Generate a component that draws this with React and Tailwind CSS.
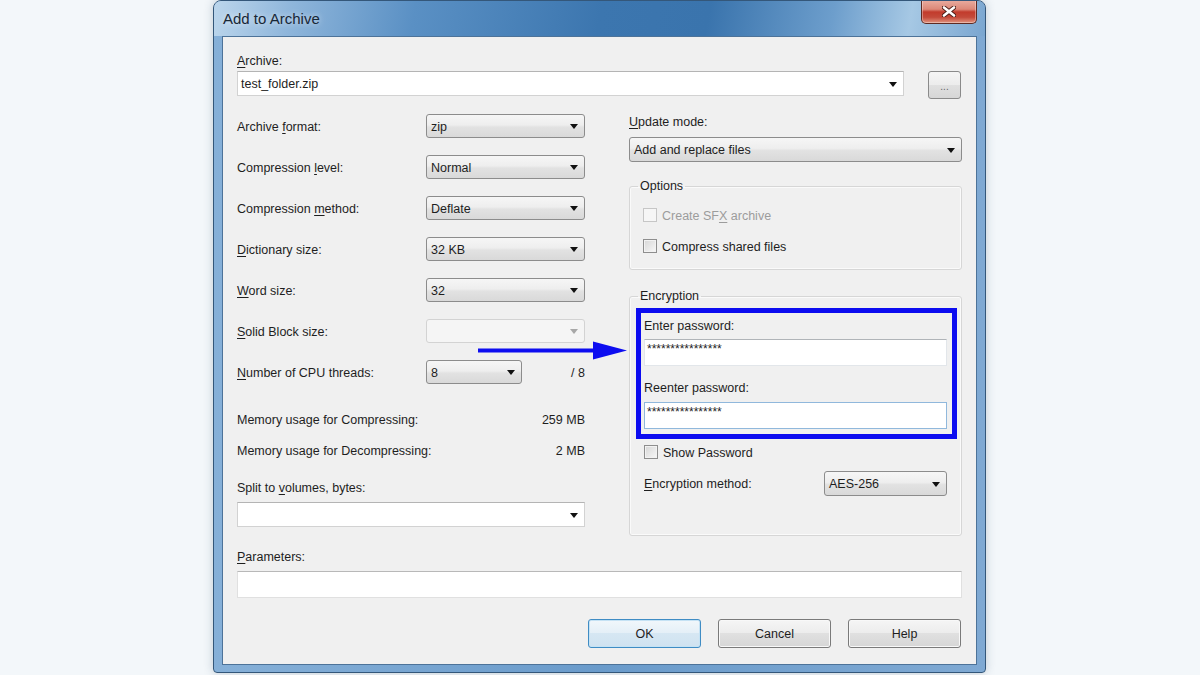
import React from "react";

function U({ children }) {
  return <span className="underline underline-offset-2">{children}</span>;
}

function Caret({ disabled }) {
  return (
    <svg width="8" height="5" viewBox="0 0 8 5" className="shrink-0">
      <polygon points="0,0 8,0 4,5" fill={disabled ? "#a8a8a8" : "#111"} />
    </svg>
  );
}

// gray read-only dropdown (Win7 style)
function Select({ value, className }) {
  return (
    <div
      className={`flex items-center justify-between rounded-[3px] border border-[#8c8c8c] bg-[linear-gradient(#f6f6f6,#eeeeee_45%,#e2e2e2_55%,#d9d9d9)] pt-[1px] pl-[4px] pr-[6px] ${className}`}
    >
      <span>{value}</span>
      <Caret />
    </div>
  );
}

// white editable combo
function Combo({ value, className }) {
  return (
    <div
      className={`flex items-center justify-between border border-[#d2d2d2] border-t-[#b4b4b4] bg-white pt-[1px] pl-[3px] pr-[6px] ${className}`}
    >
      <span>{value}</span>
      <Caret />
    </div>
  );
}

function Checkbox({ label, disabled }) {
  return (
    <div className="flex h-[16px] items-center gap-[5px]">
      {disabled ? (
        <div className="h-[14px] w-[14px] border border-[#c6c6c6] bg-[#f6f6f6]" />
      ) : (
        <div className="h-[14px] w-[14px] border border-[#8e8e8e] bg-[linear-gradient(135deg,#d6d6d6,#f8f8f8)] shadow-[inset_0_0_0_1px_#f2f2f2]" />
      )}
      <span className={disabled ? "pt-[1px] text-[#9c9c9c]" : "pt-[1px]"}>{label}</span>
    </div>
  );
}

function Row({ label, children }) {
  return (
    <div className="flex h-[24px] items-center">
      <div className="w-[189px] shrink-0 pt-[2px]">{label}</div>
      {children}
    </div>
  );
}

function DlgButton({ children, primary }) {
  return (
    <div
      className={
        primary
          ? "flex h-[29px] w-[113px] items-center justify-center rounded-[3px] border border-[#3f8cc4] bg-[linear-gradient(#f1f7fb,#e4eff7_50%,#d6e7f3_50%,#cfe2f0)] shadow-[inset_0_0_0_1px_#c5e2f4]"
          : "flex h-[29px] w-[113px] items-center justify-center rounded-[3px] border border-[#7a7a7a] bg-[linear-gradient(#f5f5f5,#ececec_50%,#e0e0e0_50%,#d6d6d6)] shadow-[inset_0_0_0_1px_#f8f8f8]"
      }
    >
      {children}
    </div>
  );
}

function CloseButton() {
  return (
    <div className="-mt-[1px] flex h-[24px] w-[56px] items-center justify-center rounded-b-[5px] border border-t-0 border-[#5e2a22] bg-[linear-gradient(#e9ada1,#dc8878_40%,#c23b2c_52%,#c44a3a_75%,#e1947f)] shadow-[inset_0_0_0_1px_rgba(255,255,255,0.35)]">
      <svg width="14" height="11" viewBox="0 0 14 11">
        <path d="M2 1.5 L12 9.5 M12 1.5 L2 9.5" stroke="#4a1d17" strokeWidth="4.4" strokeLinecap="round" />
        <path d="M2 1.5 L12 9.5 M12 1.5 L2 9.5" stroke="#fff" strokeWidth="2.6" strokeLinecap="round" />
      </svg>
    </div>
  );
}

export default function App() {
  return (
    <div className="relative h-[675px] w-[1200px] overflow-hidden bg-[#f3f7fa] font-['Liberation_Sans',Arial,sans-serif] text-[12.5px] leading-[16px] text-[#1e1e1e]">
      <div className="ml-[213px] flex h-[673px] w-[773px] flex-col overflow-hidden rounded-t-[8px] rounded-b-[4px] border border-[#34577a] bg-[linear-gradient(90deg,#86b0d8,#6a9bcb_50%,#7fa9d3)] px-[8px] pb-[7px] shadow-[0_0_10px_rgba(40,70,100,0.25)]">
        {/* title bar */}
        <div className="-mx-[8px] flex h-[35px] items-start justify-between bg-[linear-gradient(100deg,#bcd6ec_0%,#8fb6db_10%,#5a90c4_26%,#3c76af_50%,#3a74ad_64%,#6d9ecc_80%,#a6c8e4_90%,#7aa6d0_100%)] px-[8px]">
          <span className="mt-[9px] pl-[1px] text-[15px] leading-[18px] text-[#182736] [text-shadow:0_0_6px_rgba(255,255,255,0.7)]">
            Add to Archive
          </span>
          <CloseButton />
        </div>

        {/* client area */}
        <div className="flex flex-1 flex-col border border-[#4d7399] bg-[#f0f0f0] px-[14px] pt-[15px]">
          <div className="h-[16px] pt-[1px]">
            <U>A</U>rchive:
          </div>
          <div className="mt-[3px] flex items-start gap-[24px] pr-[1px]">
            <Combo value="test_folder.zip" className="h-[25px] flex-1" />
            <div className="flex h-[28px] w-[33px] items-end justify-center rounded-[3px] border border-[#8a8a8a] bg-[linear-gradient(#f5f5f5,#ececec_50%,#e0e0e0_50%,#d6d6d6)] pb-[6px] text-[10px] leading-[10px] text-[#666]">
              ...
            </div>
          </div>

          <div className="flex gap-[44px]">
            {/* left column */}
            <div className="flex w-[348px] flex-col pt-[15px]">
              <div className="flex flex-col gap-[17px]">
                <Row label={<>Archive <U>f</U>ormat:</>}>
                  <Select value="zip" className="h-[24px] w-[159px]" />
                </Row>
                <Row label={<>Compression <U>l</U>evel:</>}>
                  <Select value="Normal" className="h-[24px] w-[159px]" />
                </Row>
                <Row label={<>Compression <U>m</U>ethod:</>}>
                  <Select value="Deflate" className="h-[24px] w-[159px]" />
                </Row>
                <Row label={<><U>D</U>ictionary size:</>}>
                  <Select value="32 KB" className="h-[24px] w-[159px]" />
                </Row>
                <Row label={<><U>W</U>ord size:</>}>
                  <Select value="32" className="h-[24px] w-[159px]" />
                </Row>
                <Row label={<><U>S</U>olid Block size:</>}>
                  <div className="flex h-[24px] w-[159px] items-center justify-end rounded-[3px] border border-[#d3d3d3] bg-[#f5f5f5] pr-[6px]">
                    <Caret disabled />
                  </div>
                </Row>
                <Row label={<><U>N</U>umber of CPU threads:</>}>
                  <Select value="8" className="h-[24px] w-[96px]" />
                  <span className="flex-1 pt-[2px] text-right">/ 8</span>
                </Row>
              </div>
              <div className="mt-[27px] flex h-[16px] justify-between pt-[1px]">
                <span>Memory usage for Compressing:</span>
                <span>259 MB</span>
              </div>
              <div className="mt-[15px] flex h-[16px] justify-between pt-[1px]">
                <span>Memory usage for Decompressing:</span>
                <span>2 MB</span>
              </div>
              <div className="mt-[21px] h-[16px] pt-[1px]">
                Split to <U>v</U>olumes, bytes:
              </div>
              <Combo value="" className="mt-[7px] h-[25px] w-full" />
            </div>

            {/* right column */}
            <div className="flex w-[333px] flex-col pt-[14px]">
              <div className="h-[16px] pt-[1px]">
                <U>U</U>pdate mode:
              </div>
              <Select value="Add and replace files" className="mt-[8px] h-[25px] w-full" />

              <fieldset className="mt-[16px] rounded-[3px] border border-[#d6d6d6] pb-[15px] shadow-[inset_0_0_0_1px_#fafafa]">
                <legend className="ml-[8px] px-[2px] leading-[16px]">Options</legend>
                <div className="flex flex-col pl-[13px]">
                  <div className="mt-[13px]">
                    <Checkbox
                      disabled
                      label={<>Create SF<U>X</U> archive</>}
                    />
                  </div>
                  <div className="mt-[15px]">
                    <Checkbox label="Compress shared files" />
                  </div>
                </div>
              </fieldset>

              <fieldset className="mt-[18px] rounded-[3px] border border-[#d6d6d6] pb-[39px] shadow-[inset_0_0_0_1px_#fafafa]">
                <legend className="ml-[8px] px-[2px] leading-[16px]">Encryption</legend>
                <div className="mt-[4px] ml-[6px] mr-[4px] flex flex-col border-[5px] border-[#0c0cf0] pt-[4px] pr-[5px] pb-[5px] pl-[3px]">
                  <div className="h-[16px] pt-[1px]">Enter password:</div>
                  <div className="mt-[6px] h-[27px] border border-[#e2e6ea] border-t-[#b0b4b8] bg-white pt-[2px] pl-[2px] text-[12px] leading-[14px]">
                    ****************
                  </div>
                  <div className="mt-[13px] h-[16px] pt-[1px]">Reenter password:</div>
                  <div className="mt-[7px] h-[27px] border border-[#90b8dc] bg-white pt-[2px] pl-[2px] text-[12px] leading-[14px]">
                    ****************
                  </div>
                </div>
                <div className="flex flex-col px-[14px]">
                  <div className="mt-[5px]">
                    <Checkbox label="Show Password" />
                  </div>
                  <div className="mt-[11px] flex h-[25px] items-center justify-between">
                    <span className="pt-[1px]">
                      <U>E</U>ncryption method:
                    </span>
                    <Select value="AES-256" className="h-[25px] w-[123px]" />
                  </div>
                </div>
              </fieldset>
            </div>
          </div>

          <div className="mt-[12px] h-[16px] pt-[1px]">
            <U>P</U>arameters:
          </div>
          <div className="mt-[7px] h-[27px] border border-[#e0e0e0] border-t-[#b8b8b8] bg-white" />

          <div className="mt-[21px] flex justify-end gap-[17px] pr-[1px]">
            <DlgButton primary>OK</DlgButton>
            <DlgButton>Cancel</DlgButton>
            <DlgButton>Help</DlgButton>
          </div>
        </div>
      </div>

      {/* annotation arrow pointing at the password box */}
      <svg
        className="absolute left-[478px] top-[341px]"
        width="150"
        height="19"
        viewBox="0 0 150 19"
      >
        <rect x="0" y="7.5" width="118" height="4" fill="#0d0df0" />
        <polygon points="115,0.5 149,9.5 115,18.5" fill="#0d0df0" />
      </svg>
    </div>
  );
}
